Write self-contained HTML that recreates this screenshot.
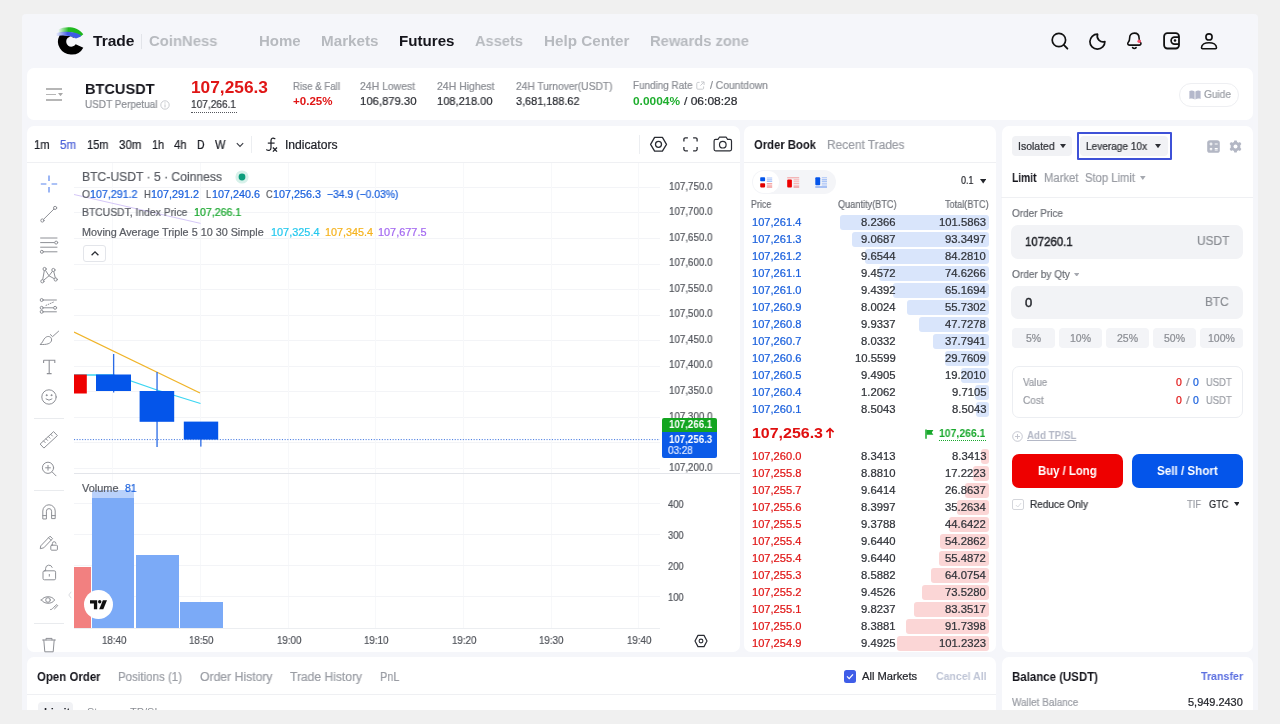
<!DOCTYPE html>
<html><head><meta charset="utf-8"><title>Futures</title>
<style>
html,body{margin:0;padding:0;}
body{width:1280px;height:724px;overflow:hidden;background:#f0f0f0;font-family:"Liberation Sans",sans-serif;position:relative;}
.b{position:absolute;display:block;}
.t{position:absolute;line-height:1;white-space:pre;transform-origin:0 0;display:block;will-change:transform;}
</style></head><body>
<div class="b" style="left:21.7px;top:13.6px;width:1236.4px;height:696.4px;background:#f5f6fa;border-radius:4px 4px 0 0;"></div>
<svg class="b" style="left:55px;top:25px;" width="32" height="32" viewBox="0 0 32 32">
<defs><linearGradient id="lg1" x1="0" x2="1" y1="0" y2="0"><stop offset="0" stop-color="#2fc62f" stop-opacity="0.05"/><stop offset="0.4" stop-color="#22bb22"/><stop offset="1" stop-color="#1cb51c"/></linearGradient>
<linearGradient id="lg2" x1="0" x2="1" y1="0" y2="0"><stop offset="0" stop-color="#5a72ee" stop-opacity="0.1"/><stop offset="0.45" stop-color="#3f5ce6"/><stop offset="1" stop-color="#3c5ae6"/></linearGradient></defs>
<path d="M28.3 22.7 A12.9 12.9 0 0 1 16.3 29.5 A12.9 12.9 0 0 1 4.6 10.4 Q12.5 9.4 20.2 13.3 A5.1 5.1 0 1 0 20.7 19.15 Z" fill="#000"/>
<path d="M3.5 4.4 C10 1.2 22 0.8 28.3 9.2 L25.6 11.6 C20 6.4 10 6.4 3.5 7.8 Z" fill="url(#lg1)"/>
<path d="M1.5 8 C8 6.4 18 5.6 25.8 10.2 L25.5 11.7 L21 13.6 C16 9.8 8 10.1 1.5 10.9 Z" fill="url(#lg2)"/>
</svg>
<span class="t" id="t0" style="top:33.10px;font-size:15px;color:#15151c;font-weight:bold;left:93.00px;transform:scaleX(1.0367);">Trade</span>
<div class="b" style="left:141px;top:34px;width:1px;height:15px;background:#e2e4e9;"></div>
<span class="t" id="t1" style="top:33.10px;font-size:15px;color:#b7babf;font-weight:bold;left:149.00px;transform:scaleX(0.9901);">CoinNess</span>
<span class="t" id="t2" style="top:33.10px;font-size:15px;color:#b7babf;font-weight:bold;left:258.50px;transform:scaleX(0.9955);">Home</span>
<span class="t" id="t3" style="top:33.10px;font-size:15px;color:#b7babf;font-weight:bold;left:320.50px;transform:scaleX(1.0141);">Markets</span>
<span class="t" id="t4" style="top:33.10px;font-size:15px;color:#15151c;font-weight:bold;left:398.50px;transform:scaleX(1.0088);">Futures</span>
<span class="t" id="t5" style="top:33.10px;font-size:15px;color:#b7babf;font-weight:bold;left:475.00px;transform:scaleX(0.9755);">Assets</span>
<span class="t" id="t6" style="top:33.10px;font-size:15px;color:#b7babf;font-weight:bold;left:543.50px;transform:scaleX(1.0156);">Help Center</span>
<span class="t" id="t7" style="top:33.10px;font-size:15px;color:#b7babf;font-weight:bold;left:649.50px;transform:scaleX(0.9814);">Rewards zone</span>
<svg class="b" style="left:1049px;top:31px;" width="20" height="20" viewBox="0 0 20 20"><circle cx="9.9" cy="9" r="6.7" fill="none" stroke="#111" stroke-width="1.7"/><path d="M14.8 13.9 L18.4 17.7" stroke="#111" stroke-width="1.8" stroke-linecap="round"/></svg>
<svg class="b" style="left:1087px;top:31px;" width="20" height="20" viewBox="0 0 20 20"><path d="M10.6 3.2 A7.5 7.5 0 1 0 17.9 10.6 A5.8 5.8 0 0 1 10.6 3.2 Z" fill="none" stroke="#111" stroke-width="1.7" stroke-linejoin="round"/></svg>
<svg class="b" style="left:1124px;top:30px;" width="20" height="22" viewBox="0 0 20 22"><path d="M10.35 3.1 C7.2 3.1 5.6 5.4 5.6 8.2 C5.6 10.4 5.2 11.4 4.3 12.3 C3.3 13.3 3.6 15.1 5.4 15.1 H15.3 C17.1 15.1 17.4 13.3 16.4 12.3 C15.5 11.4 15.1 10.4 15.1 8.2 C15.1 5.4 13.5 3.1 10.35 3.1 Z" fill="none" stroke="#111" stroke-width="1.6" stroke-linejoin="round"/><path d="M8.6 17.6 Q10.35 19.4 12.1 17.6" fill="none" stroke="#111" stroke-width="1.6" stroke-linecap="round"/><circle cx="15.2" cy="11.3" r="1.8" fill="#f4516a"/></svg>
<svg class="b" style="left:1162px;top:32px;" width="20" height="18" viewBox="0 0 20 18"><rect x="2.1" y="1.2" width="14.9" height="15.3" rx="3.3" fill="none" stroke="#111" stroke-width="1.8"/><path d="M17 5.1 H12.6 A3.5 3.5 0 0 0 12.6 12.1 H17" fill="none" stroke="#111" stroke-width="1.7"/><circle cx="13" cy="8.6" r="1.25" fill="#111"/></svg>
<svg class="b" style="left:1199px;top:31px;" width="20" height="20" viewBox="0 0 20 20"><circle cx="10" cy="5.95" r="3.1" fill="none" stroke="#111" stroke-width="1.6"/><path d="M2.5 16.8 C2.5 13.4 6 11.7 10 11.7 C14 11.7 17.5 13.4 17.5 16.8 C17.5 17.5 17.1 17.8 16.5 17.8 H3.5 C2.9 17.8 2.5 17.5 2.5 16.8 Z" fill="none" stroke="#111" stroke-width="1.6" stroke-linejoin="round"/></svg>
<div class="b" style="left:27px;top:68px;width:1226px;height:52.3px;background:#ffffff;border-radius:7px;"></div>
<div class="b" style="left:45.5px;top:88.3px;width:16.5px;height:1.6px;background:#b6b6b6;"></div>
<div class="b" style="left:45.5px;top:93.8px;width:10.5px;height:1.6px;background:#b6b6b6;"></div>
<div class="b" style="left:45.5px;top:99.3px;width:16.5px;height:1.6px;background:#b6b6b6;"></div>
<svg class="b" style="left:57.5px;top:93.3px;" width="5" height="3.2" viewBox="0 0 5 3.2"><path d="M0 0 H5 L2.5 3.2 Z" fill="#a8a8a8"/></svg>
<span class="t" id="t8" style="top:80.80px;font-size:15px;color:#15151c;font-weight:bold;left:84.50px;transform:scaleX(0.9697);">BTCUSDT</span>
<span class="t" id="t9" style="top:99.11px;font-size:10.5px;color:#8b8e94;-webkit-text-stroke:0.22px;left:84.50px;transform:scaleX(0.9506);">USDT Perpetual</span>
<svg class="b" style="left:159.5px;top:100px;" width="10" height="10" viewBox="0 0 10 10"><circle cx="5" cy="5" r="4.2" fill="none" stroke="#c4c6cb" stroke-width="0.9"/><path d="M5 4.4 V7.4" stroke="#c4c6cb" stroke-width="1"/><circle cx="5" cy="2.9" r="0.6" fill="#c4c6cb"/></svg>
<span class="t" id="t10" style="top:79.21px;font-size:17px;color:#e01616;font-weight:bold;left:191.00px;transform:scaleX(1.0180);">107,256.3</span>
<span class="t" id="t11" style="top:99.27px;font-size:11.5px;color:#33353b;-webkit-text-stroke:0.22px;left:191.00px;transform:scaleX(0.8794);">107,266.1</span>
<div class="b" style="left:191px;top:111.5px;width:45.5px;height:1px;border-top:1px dotted #55575d;"></div>
<span class="t" id="t12" style="top:80.91px;font-size:10.5px;color:#8b8e94;-webkit-text-stroke:0.22px;left:292.50px;transform:scaleX(0.9258);">Rise &amp; Fall</span>
<span class="t" id="t13" style="top:96.27px;font-size:11.5px;color:#e01616;font-weight:bold;left:292.50px;transform:scaleX(1.0044);">+0.25%</span>
<span class="t" id="t14" style="top:80.91px;font-size:10.5px;color:#8b8e94;-webkit-text-stroke:0.22px;left:360.00px;transform:scaleX(0.9918);">24H Lowest</span>
<span class="t" id="t15" style="top:96.27px;font-size:11.5px;color:#2a2c32;-webkit-text-stroke:0.22px;left:360.00px;transform:scaleX(0.9815);">106,879.30</span>
<span class="t" id="t16" style="top:80.91px;font-size:10.5px;color:#8b8e94;-webkit-text-stroke:0.22px;left:437.00px;transform:scaleX(0.9951);">24H Highest</span>
<span class="t" id="t17" style="top:96.27px;font-size:11.5px;color:#2a2c32;-webkit-text-stroke:0.22px;left:437.00px;transform:scaleX(0.9642);">108,218.00</span>
<span class="t" id="t18" style="top:80.91px;font-size:10.5px;color:#8b8e94;-webkit-text-stroke:0.22px;left:515.50px;transform:scaleX(0.9728);">24H Turnover(USDT)</span>
<span class="t" id="t19" style="top:96.27px;font-size:11.5px;color:#2a2c32;-webkit-text-stroke:0.22px;left:515.50px;transform:scaleX(0.9456);">3,681,188.62</span>
<span class="t" id="t20" style="top:80.11px;font-size:10.5px;color:#8b8e94;-webkit-text-stroke:0.22px;left:633.00px;transform:scaleX(0.9437);">Funding Rate</span>
<svg class="b" style="left:696px;top:80.5px;" width="9" height="9" viewBox="0 0 9 9"><path d="M3.6 1.4 H1.8 A1 1 0 0 0 0.8 2.4 V7.2 A1 1 0 0 0 1.8 8.2 H6.6 A1 1 0 0 0 7.6 7.2 V5.4" fill="none" stroke="#c4c6cb" stroke-width="0.9"/><path d="M5 0.9 H8.1 V4 M8 1 L4.4 4.6" fill="none" stroke="#c4c6cb" stroke-width="0.9"/></svg>
<span class="t" id="t21" style="top:80.11px;font-size:10.5px;color:#8b8e94;-webkit-text-stroke:0.22px;left:709.50px;transform:scaleX(0.9836);">/ Countdown</span>
<span class="t" id="t22" style="top:96.27px;font-size:11.5px;color:#1fae2e;font-weight:bold;left:633.00px;transform:scaleX(1.0351);">0.0004%</span>
<span class="t" id="t23" style="top:96.27px;font-size:11.5px;color:#2a2c32;-webkit-text-stroke:0.22px;left:684.00px;transform:scaleX(1.0458);">/ 06:08:28</span>
<div class="b" style="left:1179px;top:83px;width:60px;height:23.5px;background:#fff;border-radius:12px;border:1px solid #eeeff2;box-sizing:border-box;"></div>
<svg class="b" style="left:1188.5px;top:89.5px;" width="12" height="10" viewBox="0 0 12 10"><path d="M0.4 1 C2 0.2 4 0.3 5.6 1.4 V9.4 C4 8.4 2 8.3 0.4 9 Z M11.6 1 C10 0.2 8 0.3 6.4 1.4 V9.4 C8 8.4 10 8.3 11.6 9 Z" fill="#b4b8cb"/></svg>
<span class="t" id="t24" style="top:89.41px;font-size:10.5px;color:#9b9ea5;-webkit-text-stroke:0.22px;left:1204.00px;transform:scaleX(0.9632);">Guide</span>
<div class="b" style="left:27px;top:126.2px;width:713px;height:525.8px;background:#ffffff;border-radius:7px;"></div>
<span class="t" id="t25" style="top:138.79px;font-size:12px;color:#1d1f26;-webkit-text-stroke:0.22px;left:34.00px;transform:scaleX(0.9297);">1m</span>
<span class="t" id="t26" style="top:138.79px;font-size:12px;color:#4d62d8;-webkit-text-stroke:0.22px;left:60.00px;transform:scaleX(0.9597);">5m</span>
<span class="t" id="t27" style="top:138.79px;font-size:12px;color:#1d1f26;-webkit-text-stroke:0.22px;left:86.50px;transform:scaleX(0.9210);">15m</span>
<span class="t" id="t28" style="top:138.79px;font-size:12px;color:#1d1f26;-webkit-text-stroke:0.22px;left:118.50px;transform:scaleX(0.9639);">30m</span>
<span class="t" id="t29" style="top:138.79px;font-size:12px;color:#1d1f26;-webkit-text-stroke:0.22px;left:151.50px;transform:scaleX(0.8982);">1h</span>
<span class="t" id="t30" style="top:138.79px;font-size:12px;color:#1d1f26;-webkit-text-stroke:0.22px;left:174.00px;transform:scaleX(0.9357);">4h</span>
<span class="t" id="t31" style="top:138.79px;font-size:12px;color:#1d1f26;-webkit-text-stroke:0.22px;left:197.00px;transform:scaleX(0.8649);">D</span>
<span class="t" id="t32" style="top:138.79px;font-size:12px;color:#1d1f26;-webkit-text-stroke:0.22px;left:214.50px;transform:scaleX(0.9269);">W</span>
<svg class="b" style="left:235.5px;top:141.5px;" width="8" height="6" viewBox="0 0 8 6"><path d="M0.8 1.2 L4 4.4 L7.2 1.2" fill="none" stroke="#3a3c44" stroke-width="1.1"/></svg>
<div class="b" style="left:251px;top:136px;width:1px;height:17px;background:#eceef1;"></div>
<svg class="b" style="left:265px;top:136px;" width="14" height="17" viewBox="0 0 14 17"><path d="M9.9 2.7 C8 1.5 6 2.1 6 4.6 V11.8 C6 14.4 3.6 15 1.6 13.8" fill="none" stroke="#1d1f26" stroke-width="1.2" stroke-linecap="round"/><path d="M2.8 7.1 H9.6" stroke="#1d1f26" stroke-width="1.2"/><path d="M7.9 11.5 L12 15.6 M12 11.5 L7.9 15.6" stroke="#1d1f26" stroke-width="1.3"/></svg>
<span class="t" id="t33" style="top:138.79px;font-size:12px;color:#1d1f26;-webkit-text-stroke:0.22px;left:285.20px;transform:scaleX(1.0109);">Indicators</span>
<div class="b" style="left:639px;top:135px;width:1px;height:19px;background:#eceef1;"></div>
<svg class="b" style="left:649px;top:135px;" width="20" height="18" viewBox="0 0 20 18"><path d="M5.6 2.4 H13.4 L17.5 9.3 L13.4 16.1 H5.6 L1.6 9.3 Z" fill="none" stroke="#2a2c33" stroke-width="1.3" stroke-linejoin="round"/><circle cx="9.5" cy="9.3" r="3" fill="none" stroke="#2a2c33" stroke-width="1.3"/></svg>
<svg class="b" style="left:683.4px;top:137.1px;" width="16" height="15" viewBox="0 0 16 15"><path d="M0.9 4.6 V2.3 A1.5 1.5 0 0 1 2.4 0.8 H4.9 M10.1 0.8 H12.6 A1.5 1.5 0 0 1 14.1 2.3 V4.6 M14.1 9.9 V12.3 A1.5 1.5 0 0 1 12.6 13.8 H10.1 M4.9 13.8 H2.4 A1.5 1.5 0 0 1 0.9 12.3 V9.9" fill="none" stroke="#2a2c33" stroke-width="1.3"/></svg>
<svg class="b" style="left:713px;top:136px;" width="20" height="16" viewBox="0 0 20 16"><path d="M2.6 3.4 H5 L6.4 1.2 H13.2 L14.6 3.4 H17 A1.5 1.5 0 0 1 18.5 4.9 V13.3 A1.5 1.5 0 0 1 17 14.8 H2.6 A1.5 1.5 0 0 1 1.1 13.3 V4.9 A1.5 1.5 0 0 1 2.6 3.4 Z" fill="none" stroke="#2a2c33" stroke-width="1.2" stroke-linejoin="round"/><circle cx="9.8" cy="8.7" r="3.3" fill="none" stroke="#2a2c33" stroke-width="1.2"/></svg>
<div class="b" style="left:27px;top:162px;width:713px;height:1px;background:#eff0f3;"></div>
<div class="b" style="left:74px;top:187px;width:586px;height:1px;background:#f3f4f7;"></div>
<div class="b" style="left:74px;top:212px;width:586px;height:1px;background:#f3f4f7;"></div>
<div class="b" style="left:74px;top:238px;width:586px;height:1px;background:#f3f4f7;"></div>
<div class="b" style="left:74px;top:264px;width:586px;height:1px;background:#f3f4f7;"></div>
<div class="b" style="left:74px;top:289px;width:586px;height:1px;background:#f3f4f7;"></div>
<div class="b" style="left:74px;top:315px;width:586px;height:1px;background:#f3f4f7;"></div>
<div class="b" style="left:74px;top:340px;width:586px;height:1px;background:#f3f4f7;"></div>
<div class="b" style="left:74px;top:366px;width:586px;height:1px;background:#f3f4f7;"></div>
<div class="b" style="left:74px;top:391px;width:586px;height:1px;background:#f3f4f7;"></div>
<div class="b" style="left:74px;top:417px;width:586px;height:1px;background:#f3f4f7;"></div>
<div class="b" style="left:74px;top:442px;width:586px;height:1px;background:#f3f4f7;"></div>
<div class="b" style="left:74px;top:468px;width:586px;height:1px;background:#f3f4f7;"></div>
<div class="b" style="left:112px;top:163px;width:1px;height:465px;background:#f7f8fa;"></div>
<div class="b" style="left:200px;top:163px;width:1px;height:465px;background:#f7f8fa;"></div>
<div class="b" style="left:288px;top:163px;width:1px;height:465px;background:#f7f8fa;"></div>
<div class="b" style="left:375px;top:163px;width:1px;height:465px;background:#f7f8fa;"></div>
<div class="b" style="left:463px;top:163px;width:1px;height:465px;background:#f7f8fa;"></div>
<div class="b" style="left:551px;top:163px;width:1px;height:465px;background:#f7f8fa;"></div>
<div class="b" style="left:638px;top:163px;width:1px;height:465px;background:#f7f8fa;"></div>
<div class="b" style="left:74px;top:503px;width:586px;height:1px;background:#f3f4f7;"></div>
<div class="b" style="left:74px;top:534px;width:586px;height:1px;background:#f3f4f7;"></div>
<div class="b" style="left:74px;top:565px;width:586px;height:1px;background:#f3f4f7;"></div>
<div class="b" style="left:74px;top:596px;width:586px;height:1px;background:#f3f4f7;"></div>
<div class="b" style="left:74px;top:473px;width:666px;height:1px;background:#e3e5ea;"></div>
<div class="b" style="left:74px;top:628px;width:586px;height:1px;background:#eceef1;"></div>
<svg class="b" style="left:74px;top:163px;" width="590" height="310" viewBox="0 0 590 310">
<path d="M0 31.5 L126.6 60.4" stroke="#c9b8f5" stroke-width="0.8" fill="none"/>
<path d="M0 169 L126 230" stroke="#f0b429" stroke-width="1.3" fill="none"/>
<path d="M0 212 L39.5 212 L83 227 L126.5 240.5" stroke="#3cd6f2" stroke-width="1.3" fill="none"/>
<rect x="0" y="211.5" width="12.8" height="19" fill="#ee0000"/>
<rect x="39" y="191" width="1.3" height="38.5" fill="#2a6be6"/>
<rect x="22" y="211.5" width="35" height="16.5" fill="#0455ea"/>
<rect x="82.4" y="209" width="1.3" height="75" fill="#2a6be6"/>
<rect x="65.6" y="228" width="34.6" height="30.8" fill="#0455ea"/>
<rect x="126.2" y="276" width="1.3" height="7.6" fill="#2a6be6"/>
<rect x="109.8" y="258.6" width="34.4" height="18" fill="#0455ea"/>
<path d="M0 276.6 H586" stroke="#2a66dd" stroke-width="0.9" stroke-dasharray="1.1 1.6" fill="none"/>
</svg>
<div class="b" style="left:74px;top:567px;width:17px;height:61px;background:#f28080;"></div>
<div class="b" style="left:92px;top:497.5px;width:42px;height:130.5px;background:#7baaf7;"></div>
<div class="b" style="left:135.5px;top:555px;width:43px;height:73px;background:#7baaf7;"></div>
<div class="b" style="left:179.6px;top:602px;width:43px;height:26px;background:#7baaf7;"></div>
<div class="b" style="left:92px;top:489.5px;width:42px;height:8px;background:#b9d1fb;"></div>
<span class="t" id="t34" style="top:171.23px;font-size:12.6px;color:#5a5d64;-webkit-text-stroke:0.22px;left:81.70px;transform:scaleX(0.9633);">BTC-USDT · 5 · Coinness</span>
<svg class="b" style="left:235px;top:170px;" width="14" height="14" viewBox="0 0 14 14"><circle cx="7" cy="7" r="6.6" fill="#d7f1ea"/><circle cx="7" cy="7" r="3.4" fill="#0c9d7c"/></svg>
<span class="t" id="t35" style="top:188.96px;font-size:10.8px;color:#5a5d64;-webkit-text-stroke:0.22px;left:81.70px;transform:scaleX(0.9517);">O</span>
<span class="t" id="t36" style="top:188.96px;font-size:10.8px;color:#1a60dd;-webkit-text-stroke:0.22px;left:90.30px;transform:scaleX(0.9886);">107,291.2</span>
<span class="t" id="t37" style="top:188.96px;font-size:10.8px;color:#5a5d64;-webkit-text-stroke:0.22px;left:143.50px;transform:scaleX(0.8960);">H</span>
<span class="t" id="t38" style="top:188.96px;font-size:10.8px;color:#1a60dd;-webkit-text-stroke:0.22px;left:151.30px;">107,291.2</span>
<span class="t" id="t39" style="top:188.96px;font-size:10.8px;color:#5a5d64;-webkit-text-stroke:0.22px;left:205.50px;transform:scaleX(0.8312);">L</span>
<span class="t" id="t40" style="top:188.96px;font-size:10.8px;color:#1a60dd;-webkit-text-stroke:0.22px;left:211.50px;">107,240.6</span>
<span class="t" id="t41" style="top:188.96px;font-size:10.8px;color:#5a5d64;-webkit-text-stroke:0.22px;left:265.50px;transform:scaleX(0.8320);">C</span>
<span class="t" id="t42" style="top:188.96px;font-size:10.8px;color:#1a60dd;-webkit-text-stroke:0.22px;left:273.00px;">107,256.3</span>
<span class="t" id="t43" style="top:188.96px;font-size:10.8px;color:#1a60dd;-webkit-text-stroke:0.22px;left:326.50px;transform:scaleX(0.9605);">−34.9 (−0.03%)</span>
<span class="t" id="t44" style="top:206.86px;font-size:10.8px;color:#5a5d64;-webkit-text-stroke:0.22px;left:81.70px;transform:scaleX(0.9589);">BTCUSDT, Index Price</span>
<span class="t" id="t45" style="top:206.86px;font-size:10.8px;color:#17a62c;-webkit-text-stroke:0.22px;left:194.40px;transform:scaleX(0.9845);">107,266.1</span>
<span class="t" id="t46" style="top:226.86px;font-size:10.8px;color:#5a5d64;-webkit-text-stroke:0.22px;left:81.70px;">Moving Average Triple 5 10 30 Simple</span>
<span class="t" id="t47" style="top:226.86px;font-size:10.8px;color:#25c8ee;-webkit-text-stroke:0.22px;left:271.00px;transform:scaleX(1.0094);">107,325.4</span>
<span class="t" id="t48" style="top:226.86px;font-size:10.8px;color:#f5b31f;-webkit-text-stroke:0.22px;left:325.00px;">107,345.4</span>
<span class="t" id="t49" style="top:226.86px;font-size:10.8px;color:#a46af0;-webkit-text-stroke:0.22px;left:378.00px;transform:scaleX(1.0094);">107,677.5</span>
<div class="b" style="left:82.5px;top:244.5px;width:23.5px;height:17px;background:#fff;border-radius:3px;border:1px solid #e3e5ea;box-sizing:border-box;"></div>
<svg class="b" style="left:89.5px;top:249.5px;" width="10" height="7" viewBox="0 0 10 7"><path d="M1.6 5.2 L5 1.8 L8.4 5.2" fill="none" stroke="#2a2c33" stroke-width="1.3"/></svg>
<span class="t" id="t50" style="top:482.66px;font-size:10.8px;color:#5a5d64;-webkit-text-stroke:0.22px;left:81.70px;transform:scaleX(1.0134);">Volume</span>
<span class="t" id="t51" style="top:482.66px;font-size:10.8px;color:#1a60dd;-webkit-text-stroke:0.22px;left:124.50px;transform:scaleX(0.9571);">81</span>
<span class="t" id="t52" style="top:180.63px;font-size:10.6px;color:#50535a;-webkit-text-stroke:0.22px;left:668.90px;transform:scaleX(0.9228);">107,750.0</span>
<span class="t" id="t53" style="top:206.18px;font-size:10.6px;color:#50535a;-webkit-text-stroke:0.22px;left:668.90px;transform:scaleX(0.9228);">107,700.0</span>
<span class="t" id="t54" style="top:231.73px;font-size:10.6px;color:#50535a;-webkit-text-stroke:0.22px;left:668.90px;transform:scaleX(0.9228);">107,650.0</span>
<span class="t" id="t55" style="top:257.28px;font-size:10.6px;color:#50535a;-webkit-text-stroke:0.22px;left:668.90px;transform:scaleX(0.9228);">107,600.0</span>
<span class="t" id="t56" style="top:282.83px;font-size:10.6px;color:#50535a;-webkit-text-stroke:0.22px;left:668.90px;transform:scaleX(0.9228);">107,550.0</span>
<span class="t" id="t57" style="top:308.38px;font-size:10.6px;color:#50535a;-webkit-text-stroke:0.22px;left:668.90px;transform:scaleX(0.9228);">107,500.0</span>
<span class="t" id="t58" style="top:333.93px;font-size:10.6px;color:#50535a;-webkit-text-stroke:0.22px;left:668.90px;transform:scaleX(0.9228);">107,450.0</span>
<span class="t" id="t59" style="top:359.48px;font-size:10.6px;color:#50535a;-webkit-text-stroke:0.22px;left:668.90px;transform:scaleX(0.9228);">107,400.0</span>
<span class="t" id="t60" style="top:385.03px;font-size:10.6px;color:#50535a;-webkit-text-stroke:0.22px;left:668.90px;transform:scaleX(0.9228);">107,350.0</span>
<span class="t" id="t61" style="top:410.58px;font-size:10.6px;color:#50535a;-webkit-text-stroke:0.22px;left:668.90px;transform:scaleX(0.9228);">107,300.0</span>
<span class="t" id="t62" style="top:461.68px;font-size:10.6px;color:#50535a;-webkit-text-stroke:0.22px;left:668.90px;transform:scaleX(0.9228);">107,200.0</span>
<div class="b" style="left:662px;top:417.7px;width:54.8px;height:14.5px;background:#13a520;border-radius:2px 2px 0 0;"></div>
<div class="b" style="left:662px;top:432px;width:54.8px;height:26px;background:#0b5be8;border-radius:0 0 2px 2px;"></div>
<span class="t" id="t63" style="top:419.23px;font-size:10.6px;color:#fff;font-weight:bold;left:669.00px;transform:scaleX(0.9164);">107,266.1</span>
<span class="t" id="t64" style="top:433.73px;font-size:10.6px;color:#fff;font-weight:bold;left:669.00px;transform:scaleX(0.9164);">107,256.3</span>
<span class="t" id="t65" style="top:445.23px;font-size:10.6px;color:#dfe8ff;-webkit-text-stroke:0.22px;left:668.30px;transform:scaleX(0.9353);">03:28</span>
<span class="t" id="t66" style="top:498.53px;font-size:10.6px;color:#50535a;-webkit-text-stroke:0.22px;left:668.30px;transform:scaleX(0.8876);">400</span>
<span class="t" id="t67" style="top:529.63px;font-size:10.6px;color:#50535a;-webkit-text-stroke:0.22px;left:668.30px;transform:scaleX(0.8876);">300</span>
<span class="t" id="t68" style="top:560.73px;font-size:10.6px;color:#50535a;-webkit-text-stroke:0.22px;left:668.30px;transform:scaleX(0.8876);">200</span>
<span class="t" id="t69" style="top:591.83px;font-size:10.6px;color:#50535a;-webkit-text-stroke:0.22px;left:668.30px;transform:scaleX(0.8876);">100</span>
<span class="t" id="t70" style="top:635.19px;font-size:11px;color:#50535a;-webkit-text-stroke:0.22px;left:101.50px;transform:scaleX(0.8863);">18:40</span>
<span class="t" id="t71" style="top:635.19px;font-size:11px;color:#50535a;-webkit-text-stroke:0.22px;left:189.00px;transform:scaleX(0.8863);">18:50</span>
<span class="t" id="t72" style="top:635.19px;font-size:11px;color:#50535a;-webkit-text-stroke:0.22px;left:276.50px;transform:scaleX(0.8863);">19:00</span>
<span class="t" id="t73" style="top:635.19px;font-size:11px;color:#50535a;-webkit-text-stroke:0.22px;left:364.00px;transform:scaleX(0.8863);">19:10</span>
<span class="t" id="t74" style="top:635.19px;font-size:11px;color:#50535a;-webkit-text-stroke:0.22px;left:451.50px;transform:scaleX(0.8863);">19:20</span>
<span class="t" id="t75" style="top:635.19px;font-size:11px;color:#50535a;-webkit-text-stroke:0.22px;left:539.00px;transform:scaleX(0.8863);">19:30</span>
<span class="t" id="t76" style="top:635.19px;font-size:11px;color:#50535a;-webkit-text-stroke:0.22px;left:627.00px;transform:scaleX(0.8863);">19:40</span>
<svg class="b" style="left:693.7px;top:633.8px;" width="14" height="14" viewBox="0 0 14 14"><path d="M4 1.4 H10 L13 7 L10 12.6 H4 L1 7 Z" fill="none" stroke="#2a2c33" stroke-width="1.2" stroke-linejoin="round"/><circle cx="7" cy="7" r="1.9" fill="none" stroke="#2a2c33" stroke-width="1.1"/></svg>
<svg class="b" style="left:83.5px;top:589.5px;" width="29" height="29" viewBox="0 0 29 29"><circle cx="14.5" cy="14.5" r="14.5" fill="#fff"/><path d="M6 10.2 H13.2 V19.2 H9.9 V13.4 H6 Z" fill="#111"/><circle cx="15.7" cy="11.8" r="1.7" fill="#111"/><path d="M18.9 10.2 H23 L19.3 19.2 H15.2 Z" fill="#111"/></svg>
<svg class="b" style="left:67.5px;top:590.5px;" width="4" height="8" viewBox="0 0 4 8"><path d="M3.2 0.8 L0.8 4 L3.2 7.2" fill="none" stroke="#d5d7dc" stroke-width="0.9"/></svg>
<svg class="b" style="left:37px;top:172px;" width="24" height="24" viewBox="0 0 24 24"><g stroke="#5a86ee" stroke-width="1.2" fill="none"><path d="M12 3.6 V9 M12 15 V20.4 M3.8 12 H9.4 M14.6 12 H20.2"/></g></svg>
<svg class="b" style="left:37.0px;top:202.0px;" width="24" height="24" viewBox="0 0 24 24"><g fill="none" stroke="#8e9096" stroke-width="1" stroke-linecap="round" stroke-linejoin="round"><path d="M6.6 17.3 L16.9 7.1"/><circle cx="5.4" cy="18.5" r="1.6"/><circle cx="18.1" cy="5.9" r="1.6"/></g></svg>
<svg class="b" style="left:37.0px;top:232.5px;" width="24" height="24" viewBox="0 0 24 24"><g fill="none" stroke="#8e9096" stroke-width="1" stroke-linecap="round" stroke-linejoin="round"><path d="M3.6 5 H20 M3.6 9.6 H17.6 M3.6 14.2 H20 M6.6 18.8 H20"/><circle cx="19.2" cy="9.6" r="1.5" fill="#fff"/><circle cx="4.9" cy="18.8" r="1.5" fill="#fff"/></g></svg>
<svg class="b" style="left:37.0px;top:263.0px;" width="24" height="24" viewBox="0 0 24 24"><g fill="none" stroke="#8e9096" stroke-width="1" stroke-linecap="round" stroke-linejoin="round"><path d="M5.4 18.3 L7.6 6 L12 12.8 L16.4 7 L18.7 16.5 L12 12.8 L5.4 18.3"/><circle cx="7.6" cy="6" r="1.6" fill="#fff"/><circle cx="16.4" cy="7" r="1.6" fill="#fff"/><circle cx="5.4" cy="18.3" r="1.6" fill="#fff"/><circle cx="18.7" cy="16.5" r="1.6" fill="#fff"/></g></svg>
<svg class="b" style="left:37.0px;top:294.0px;" width="24" height="24" viewBox="0 0 24 24"><g fill="none" stroke="#8e9096" stroke-width="1" stroke-linecap="round" stroke-linejoin="round"><path d="M6.2 6 H19.4 M6.2 13.8 H16.6 M6.2 17.8 H19.4"/><path d="M9 11.4 L17.6 7.6" stroke-dasharray="0.8 1.6"/><circle cx="4.7" cy="6" r="1.5" fill="#fff"/><circle cx="4.7" cy="13.8" r="1.5" fill="#fff"/><circle cx="18.1" cy="13.8" r="1.5" fill="#fff"/><circle cx="4.7" cy="17.8" r="1.5" fill="#fff"/></g></svg>
<svg class="b" style="left:37.0px;top:326.0px;" width="24" height="24" viewBox="0 0 24 24"><g fill="none" stroke="#8e9096" stroke-width="1" stroke-linecap="round" stroke-linejoin="round"><path d="M3.4 18.4 C5.8 17 6 13.4 8.6 11.4 C11.4 9.4 14.8 10.8 14.6 14 C14.4 17.6 9.4 19 3.4 18.4 Z"/><path d="M13.4 8.6 L15.6 10.6 L21.6 5.2"/></g></svg>
<svg class="b" style="left:37px;top:355px;" width="24" height="24" viewBox="0 0 24 24"><path d="M6.6 5.2 H17.8 V8 M6.6 5.2 V8 M12.2 5.2 V18.6 M9.8 18.6 H14.6" fill="none" stroke="#8e9096" stroke-width="1.1"/></svg>
<svg class="b" style="left:36.8px;top:385.4px;" width="24" height="24" viewBox="0 0 24 24"><g fill="none" stroke="#8e9096" stroke-width="1" stroke-linecap="round" stroke-linejoin="round"><circle cx="12" cy="12" r="7.2"/><path d="M9 14 Q12 16.6 15 14"/><circle cx="9.6" cy="10.2" r="0.5" fill="#8e9096"/><circle cx="14.4" cy="10.2" r="0.5" fill="#8e9096"/></g></svg>
<div class="b" style="left:33.5px;top:417.5px;width:30px;height:1px;background:#e9ebee;"></div>
<svg class="b" style="left:37.0px;top:427.0px;" width="24" height="24" viewBox="0 0 24 24"><g fill="none" stroke="#8e9096" stroke-width="1" stroke-linecap="round" stroke-linejoin="round"><path d="M3.4 16.8 L16.6 4.6 L20.4 8.6 L7.2 20.8 Z"/><path d="M6.6 14 L8.2 15.6 M9 11.8 L10.6 13.4 M11.4 9.6 L13 11.2 M13.8 7.4 L15.4 9"/></g></svg>
<svg class="b" style="left:36.5px;top:457.0px;" width="24" height="24" viewBox="0 0 24 24"><g fill="none" stroke="#8e9096" stroke-width="1" stroke-linecap="round" stroke-linejoin="round"><circle cx="11" cy="10.8" r="5.6"/><path d="M15.2 15 L19 18.8 M8.6 10.8 H13.4 M11 8.4 V13.2"/></g></svg>
<div class="b" style="left:33.5px;top:490px;width:30px;height:1px;background:#e9ebee;"></div>
<svg class="b" style="left:37.0px;top:499.5px;" width="24" height="24" viewBox="0 0 24 24"><g fill="none" stroke="#8e9096" stroke-width="1" stroke-linecap="round" stroke-linejoin="round"><path d="M5.8 18.6 V11 A6.2 6.2 0 0 1 18.2 11 V18.6 H14.6 V11.2 A2.6 2.6 0 0 0 9.4 11.2 V18.6 Z"/><path d="M5.8 15.6 H9.4 M14.6 15.6 H18.2"/></g></svg>
<svg class="b" style="left:37.0px;top:530.0px;" width="24" height="24" viewBox="0 0 24 24"><g fill="none" stroke="#8e9096" stroke-width="1" stroke-linecap="round" stroke-linejoin="round"><path d="M4 15.6 L13 6.2 L15.6 8.6 L6.8 17.8 L3.6 18.6 Z M11.6 7.8 L14 10.2"/><rect x="13.8" y="15.2" width="6.6" height="5" rx="0.8"/><path d="M15.4 15.2 V13.6 A1.8 1.8 0 0 1 19 13.4"/></g></svg>
<svg class="b" style="left:37.0px;top:560.5px;" width="24" height="24" viewBox="0 0 24 24"><g fill="none" stroke="#8e9096" stroke-width="1" stroke-linecap="round" stroke-linejoin="round"><rect x="6" y="9.8" width="12.6" height="9" rx="1.4"/><path d="M8.6 9.8 V7.4 A3.4 3.4 0 0 1 15.2 6.4"/><path d="M12.3 13.4 V15.2"/></g></svg>
<svg class="b" style="left:36.5px;top:589.5px;" width="24" height="24" viewBox="0 0 24 24"><g fill="none" stroke="#8e9096" stroke-width="1" stroke-linecap="round" stroke-linejoin="round"><path d="M4.4 10 C7 5.6 15 5.6 17.6 10 C15 14.4 7 14.4 4.4 10 Z"/><circle cx="11" cy="10" r="2.3"/><path d="M13.6 19.6 C15 19.6 15.6 18.6 16.4 17.6 L19.8 14.6 L20.8 15.6 L17.6 18.8"/></g></svg>
<div class="b" style="left:33.5px;top:623px;width:30px;height:1px;background:#e9ebee;"></div>
<svg class="b" style="left:37.0px;top:632.5px;" width="24" height="24" viewBox="0 0 24 24"><g fill="none" stroke="#8e9096" stroke-width="1" stroke-linecap="round" stroke-linejoin="round"><path d="M5.6 7 H18.4 M9 7 V5.4 H15 V7 M6.8 7 L7.8 18.8 H16.2 L17.2 7"/></g></svg>
<div class="b" style="left:744px;top:126.2px;width:251.9px;height:525.8px;background:#ffffff;border-radius:7px;"></div>
<span class="t" id="t77" style="top:139.02px;font-size:12.5px;color:#15151c;font-weight:bold;left:754.40px;transform:scaleX(0.9016);">Order Book</span>
<span class="t" id="t78" style="top:139.02px;font-size:12.5px;color:#9a9da4;-webkit-text-stroke:0.22px;left:827.00px;transform:scaleX(0.9533);">Recent Trades</span>
<div class="b" style="left:744px;top:162px;width:252px;height:1px;background:#eff0f3;"></div>
<div class="b" style="left:751.5px;top:170px;width:84px;height:24px;background:#f4f5f8;border-radius:12px;"></div>
<div class="b" style="left:752.5px;top:171.2px;width:26.8px;height:21.6px;background:#fff;border-radius:10.8px;"></div>
<svg class="b" style="left:760px;top:176.5px;" width="13" height="11" viewBox="0 0 13 11"><rect x="0.2" y="0.3" width="4.9" height="4" rx="0.8" fill="#0455ea"/><rect x="0.2" y="6.2" width="4.9" height="4.2" rx="0.8" fill="#e00000"/><path d="M6.8 1 H12.2 M6.8 2.7 H12.2 M6.8 4.4 H12.2" stroke="#a9c4f7" stroke-width="1.1"/><path d="M6.8 6.6 H12.2 M6.8 8.3 H12.2" stroke="#f5aaaa" stroke-width="1.1"/><path d="M6.8 10 H12.2" stroke="#ea6a6a" stroke-width="1"/></svg>
<svg class="b" style="left:787.4px;top:176.5px;" width="13" height="11" viewBox="0 0 13 11"><path d="M0.2 0.8 H12.2" stroke="#f29b9b" stroke-width="1"/><rect x="0.2" y="2.5" width="4.7" height="7.9" rx="0.9" fill="#ee0000"/><path d="M6.6 2.9 H12.2 M6.6 4.7 H12.2 M6.6 6.5 H12.2 M6.6 8.3 H12.2" stroke="#f7b5b5" stroke-width="1.1"/><path d="M6.6 10 H12.2" stroke="#ea6a6a" stroke-width="1"/></svg>
<svg class="b" style="left:814.6px;top:176.5px;" width="13" height="11" viewBox="0 0 13 11"><rect x="0.3" y="0.3" width="4.9" height="7.9" rx="0.9" fill="#0455ea"/><path d="M6.8 0.8 H12 M6.8 2.6 H12 M6.8 4.4 H12 M6.8 6.2 H12 M6.8 8 H12" stroke="#a9c4f7" stroke-width="1.1"/><path d="M0.3 10 H12" stroke="#5a8cf0" stroke-width="1"/></svg>
<span class="t" id="t79" style="top:175.47px;font-size:11.5px;color:#24262c;-webkit-text-stroke:0.22px;left:961.00px;transform:scaleX(0.7812);">0.1</span>
<svg class="b" style="left:979.6px;top:179.4px;" width="6.4" height="4.4" viewBox="0 0 6.4 4.4"><path d="M0 0 H6.4 L3.2 4.4 Z" fill="#24262c"/></svg>
<span class="t" id="t80" style="top:199.53px;font-size:10px;color:#6c6f76;-webkit-text-stroke:0.22px;left:751.40px;transform:scaleX(0.8861);">Price</span>
<span class="t" id="t81" style="top:199.53px;font-size:10px;color:#6c6f76;-webkit-text-stroke:0.22px;left:838.40px;transform:scaleX(0.9170);">Quantity(BTC)</span>
<span class="t" id="t82" style="top:199.53px;font-size:10px;color:#6c6f76;-webkit-text-stroke:0.22px;left:945.40px;transform:scaleX(0.9122);">Total(BTC)</span>
<div class="b" style="left:839.59702859px;top:215.2px;width:149.40297141px;height:14.6px;background:#d9e5fb;border-radius:3px;"></div>
<span class="t" id="t83" style="top:217.31px;font-size:10.5px;color:#1a60dd;-webkit-text-stroke:0.22px;left:751.60px;transform:scaleX(1.0574);">107,261.4</span>
<span class="t" id="t84" style="top:217.31px;font-size:10.5px;color:#303339;-webkit-text-stroke:0.22px;left:860.90px;transform:scaleX(1.0739);">8.2366</span>
<span class="t" id="t85" style="top:217.31px;font-size:10.5px;color:#303339;-webkit-text-stroke:0.22px;left:938.90px;transform:scaleX(1.0754);">101.5863</span>
<div class="b" style="left:851.71059621px;top:232.2px;width:137.28940379px;height:14.6px;background:#d9e5fb;border-radius:3px;"></div>
<span class="t" id="t86" style="top:234.31px;font-size:10.5px;color:#1a60dd;-webkit-text-stroke:0.22px;left:751.60px;transform:scaleX(1.0574);">107,261.3</span>
<span class="t" id="t87" style="top:234.31px;font-size:10.5px;color:#303339;-webkit-text-stroke:0.22px;left:860.90px;transform:scaleX(1.0739);">9.0687</span>
<span class="t" id="t88" style="top:234.31px;font-size:10.5px;color:#303339;-webkit-text-stroke:0.22px;left:945.20px;transform:scaleX(1.0746);">93.3497</span>
<div class="b" style="left:865.0479333px;top:249.2px;width:123.9520667px;height:14.6px;background:#d9e5fb;border-radius:3px;"></div>
<span class="t" id="t89" style="top:251.31px;font-size:10.5px;color:#1a60dd;-webkit-text-stroke:0.22px;left:751.60px;transform:scaleX(1.0574);">107,261.2</span>
<span class="t" id="t90" style="top:251.31px;font-size:10.5px;color:#303339;-webkit-text-stroke:0.22px;left:860.90px;transform:scaleX(1.0739);">9.6544</span>
<span class="t" id="t91" style="top:251.31px;font-size:10.5px;color:#303339;-webkit-text-stroke:0.22px;left:945.20px;transform:scaleX(1.0746);">84.2810</span>
<div class="b" style="left:879.24665938px;top:266.2px;width:109.75334061999999px;height:14.6px;background:#d9e5fb;border-radius:3px;"></div>
<span class="t" id="t92" style="top:268.31px;font-size:10.5px;color:#1a60dd;-webkit-text-stroke:0.22px;left:751.60px;transform:scaleX(1.0574);">107,261.1</span>
<span class="t" id="t93" style="top:268.31px;font-size:10.5px;color:#303339;-webkit-text-stroke:0.22px;left:860.90px;transform:scaleX(1.0739);">9.4572</span>
<span class="t" id="t94" style="top:268.31px;font-size:10.5px;color:#303339;-webkit-text-stroke:0.22px;left:945.20px;transform:scaleX(1.0746);">74.6266</span>
<div class="b" style="left:893.15536342px;top:283.2px;width:95.84463657999999px;height:14.6px;background:#d9e5fb;border-radius:3px;"></div>
<span class="t" id="t95" style="top:285.31px;font-size:10.5px;color:#1a60dd;-webkit-text-stroke:0.22px;left:751.60px;transform:scaleX(1.0574);">107,261.0</span>
<span class="t" id="t96" style="top:285.31px;font-size:10.5px;color:#303339;-webkit-text-stroke:0.22px;left:860.90px;transform:scaleX(1.0739);">9.4392</span>
<span class="t" id="t97" style="top:285.31px;font-size:10.5px;color:#303339;-webkit-text-stroke:0.22px;left:945.20px;transform:scaleX(1.0746);">65.1694</span>
<div class="b" style="left:907.03759486px;top:300.2px;width:81.96240514px;height:14.6px;background:#d9e5fb;border-radius:3px;"></div>
<span class="t" id="t98" style="top:302.31px;font-size:10.5px;color:#1a60dd;-webkit-text-stroke:0.22px;left:751.60px;transform:scaleX(1.0574);">107,260.9</span>
<span class="t" id="t99" style="top:302.31px;font-size:10.5px;color:#303339;-webkit-text-stroke:0.22px;left:860.90px;transform:scaleX(1.0739);">8.0024</span>
<span class="t" id="t100" style="top:302.31px;font-size:10.5px;color:#303339;-webkit-text-stroke:0.22px;left:945.20px;transform:scaleX(1.0746);">55.7302</span>
<div class="b" style="left:918.80672454px;top:317.2px;width:70.19327546px;height:14.6px;background:#d9e5fb;border-radius:3px;"></div>
<span class="t" id="t101" style="top:319.31px;font-size:10.5px;color:#1a60dd;-webkit-text-stroke:0.22px;left:751.60px;transform:scaleX(1.0574);">107,260.8</span>
<span class="t" id="t102" style="top:319.31px;font-size:10.5px;color:#303339;-webkit-text-stroke:0.22px;left:860.90px;transform:scaleX(1.0739);">9.9337</span>
<span class="t" id="t103" style="top:319.31px;font-size:10.5px;color:#303339;-webkit-text-stroke:0.22px;left:945.20px;transform:scaleX(1.0746);">47.7278</span>
<div class="b" style="left:933.41621713px;top:334.2px;width:55.58378286999999px;height:14.6px;background:#d9e5fb;border-radius:3px;"></div>
<span class="t" id="t104" style="top:336.31px;font-size:10.5px;color:#1a60dd;-webkit-text-stroke:0.22px;left:751.60px;transform:scaleX(1.0574);">107,260.7</span>
<span class="t" id="t105" style="top:336.31px;font-size:10.5px;color:#303339;-webkit-text-stroke:0.22px;left:860.90px;transform:scaleX(1.0739);">8.0332</span>
<span class="t" id="t106" style="top:336.31px;font-size:10.5px;color:#303339;-webkit-text-stroke:0.22px;left:945.20px;transform:scaleX(1.0746);">37.7941</span>
<div class="b" style="left:945.23064437px;top:351.2px;width:43.76935562999999px;height:14.6px;background:#d9e5fb;border-radius:3px;"></div>
<span class="t" id="t107" style="top:353.31px;font-size:10.5px;color:#1a60dd;-webkit-text-stroke:0.22px;left:751.60px;transform:scaleX(1.0574);">107,260.6</span>
<span class="t" id="t108" style="top:353.31px;font-size:10.5px;color:#303339;-webkit-text-stroke:0.22px;left:854.60px;transform:scaleX(1.0746);">10.5599</span>
<span class="t" id="t109" style="top:353.31px;font-size:10.5px;color:#303339;-webkit-text-stroke:0.22px;left:945.20px;transform:scaleX(1.0746);">29.7609</span>
<div class="b" style="left:960.7610893px;top:368.2px;width:28.238910699999998px;height:14.6px;background:#d9e5fb;border-radius:3px;"></div>
<span class="t" id="t110" style="top:370.31px;font-size:10.5px;color:#1a60dd;-webkit-text-stroke:0.22px;left:751.60px;transform:scaleX(1.0574);">107,260.5</span>
<span class="t" id="t111" style="top:370.31px;font-size:10.5px;color:#303339;-webkit-text-stroke:0.22px;left:860.90px;transform:scaleX(1.0739);">9.4905</span>
<span class="t" id="t112" style="top:370.31px;font-size:10.5px;color:#303339;-webkit-text-stroke:0.22px;left:945.20px;transform:scaleX(1.0746);">19.2010</span>
<div class="b" style="left:974.71876765px;top:385.2px;width:14.281232349999998px;height:14.6px;background:#d9e5fb;border-radius:3px;"></div>
<span class="t" id="t113" style="top:387.31px;font-size:10.5px;color:#1a60dd;-webkit-text-stroke:0.22px;left:751.60px;transform:scaleX(1.0574);">107,260.4</span>
<span class="t" id="t114" style="top:387.31px;font-size:10.5px;color:#303339;-webkit-text-stroke:0.22px;left:860.90px;transform:scaleX(1.0739);">1.2062</span>
<span class="t" id="t115" style="top:387.31px;font-size:10.5px;color:#303339;-webkit-text-stroke:0.22px;left:951.50px;transform:scaleX(1.0739);">9.7105</span>
<div class="b" style="left:976.49272599px;top:402.2px;width:12.50727401px;height:14.6px;background:#d9e5fb;border-radius:3px;"></div>
<span class="t" id="t116" style="top:404.31px;font-size:10.5px;color:#1a60dd;-webkit-text-stroke:0.22px;left:751.60px;transform:scaleX(1.0574);">107,260.1</span>
<span class="t" id="t117" style="top:404.31px;font-size:10.5px;color:#303339;-webkit-text-stroke:0.22px;left:860.90px;transform:scaleX(1.0739);">8.5043</span>
<span class="t" id="t118" style="top:404.31px;font-size:10.5px;color:#303339;-webkit-text-stroke:0.22px;left:951.50px;transform:scaleX(1.0739);">8.5043</span>
<div class="b" style="left:981.4511235px;top:449.2px;width:7.5488765px;height:14.6px;background:#fbd6d6;border-radius:3px;"></div>
<span class="t" id="t119" style="top:451.31px;font-size:10.5px;color:#e01616;-webkit-text-stroke:0.22px;left:751.60px;transform:scaleX(1.0574);">107,260.0</span>
<span class="t" id="t120" style="top:451.31px;font-size:10.5px;color:#303339;-webkit-text-stroke:0.22px;left:860.90px;transform:scaleX(1.0739);">8.3413</span>
<span class="t" id="t121" style="top:451.31px;font-size:10.5px;color:#303339;-webkit-text-stroke:0.22px;left:951.50px;transform:scaleX(1.0739);">8.3413</span>
<div class="b" style="left:973.4138185px;top:466.2px;width:15.5861815px;height:14.6px;background:#fbd6d6;border-radius:3px;"></div>
<span class="t" id="t122" style="top:468.31px;font-size:10.5px;color:#e01616;-webkit-text-stroke:0.22px;left:751.60px;transform:scaleX(1.0574);">107,255.8</span>
<span class="t" id="t123" style="top:468.31px;font-size:10.5px;color:#303339;-webkit-text-stroke:0.22px;left:860.90px;transform:scaleX(1.0739);">8.8810</span>
<span class="t" id="t124" style="top:468.31px;font-size:10.5px;color:#303339;-webkit-text-stroke:0.22px;left:945.20px;transform:scaleX(1.0746);">17.2223</span>
<div class="b" style="left:964.6883515px;top:483.2px;width:24.3116485px;height:14.6px;background:#fbd6d6;border-radius:3px;"></div>
<span class="t" id="t125" style="top:485.31px;font-size:10.5px;color:#e01616;-webkit-text-stroke:0.22px;left:751.60px;transform:scaleX(1.0574);">107,255.7</span>
<span class="t" id="t126" style="top:485.31px;font-size:10.5px;color:#303339;-webkit-text-stroke:0.22px;left:860.90px;transform:scaleX(1.0739);">9.6414</span>
<span class="t" id="t127" style="top:485.31px;font-size:10.5px;color:#303339;-webkit-text-stroke:0.22px;left:945.20px;transform:scaleX(1.0746);">26.8637</span>
<div class="b" style="left:957.086623px;top:500.2px;width:31.913376999999997px;height:14.6px;background:#fbd6d6;border-radius:3px;"></div>
<span class="t" id="t128" style="top:502.31px;font-size:10.5px;color:#e01616;-webkit-text-stroke:0.22px;left:751.60px;transform:scaleX(1.0574);">107,255.6</span>
<span class="t" id="t129" style="top:502.31px;font-size:10.5px;color:#303339;-webkit-text-stroke:0.22px;left:860.90px;transform:scaleX(1.0739);">8.3997</span>
<span class="t" id="t130" style="top:502.31px;font-size:10.5px;color:#303339;-webkit-text-stroke:0.22px;left:945.20px;transform:scaleX(1.0746);">35.2634</span>
<div class="b" style="left:948.598809px;top:517.2px;width:40.401191000000004px;height:14.6px;background:#fbd6d6;border-radius:3px;"></div>
<span class="t" id="t131" style="top:519.31px;font-size:10.5px;color:#e01616;-webkit-text-stroke:0.22px;left:751.60px;transform:scaleX(1.0574);">107,255.5</span>
<span class="t" id="t132" style="top:519.31px;font-size:10.5px;color:#303339;-webkit-text-stroke:0.22px;left:860.90px;transform:scaleX(1.0739);">9.3788</span>
<span class="t" id="t133" style="top:519.31px;font-size:10.5px;color:#303339;-webkit-text-stroke:0.22px;left:945.20px;transform:scaleX(1.0746);">44.6422</span>
<div class="b" style="left:939.870989px;top:534.2px;width:49.129011000000006px;height:14.6px;background:#fbd6d6;border-radius:3px;"></div>
<span class="t" id="t134" style="top:536.31px;font-size:10.5px;color:#e01616;-webkit-text-stroke:0.22px;left:751.60px;transform:scaleX(1.0574);">107,255.4</span>
<span class="t" id="t135" style="top:536.31px;font-size:10.5px;color:#303339;-webkit-text-stroke:0.22px;left:860.90px;transform:scaleX(1.0739);">9.6440</span>
<span class="t" id="t136" style="top:536.31px;font-size:10.5px;color:#303339;-webkit-text-stroke:0.22px;left:945.20px;transform:scaleX(1.0746);">54.2862</span>
<div class="b" style="left:938.784084px;top:551.2px;width:50.215916px;height:14.6px;background:#fbd6d6;border-radius:3px;"></div>
<span class="t" id="t137" style="top:553.31px;font-size:10.5px;color:#e01616;-webkit-text-stroke:0.22px;left:751.60px;transform:scaleX(1.0574);">107,255.4</span>
<span class="t" id="t138" style="top:553.31px;font-size:10.5px;color:#303339;-webkit-text-stroke:0.22px;left:860.90px;transform:scaleX(1.0739);">9.6440</span>
<span class="t" id="t139" style="top:553.31px;font-size:10.5px;color:#303339;-webkit-text-stroke:0.22px;left:945.20px;transform:scaleX(1.0746);">55.4872</span>
<div class="b" style="left:931.011763px;top:568.2px;width:57.988237000000005px;height:14.6px;background:#fbd6d6;border-radius:3px;"></div>
<span class="t" id="t140" style="top:570.31px;font-size:10.5px;color:#e01616;-webkit-text-stroke:0.22px;left:751.60px;transform:scaleX(1.0574);">107,255.3</span>
<span class="t" id="t141" style="top:570.31px;font-size:10.5px;color:#303339;-webkit-text-stroke:0.22px;left:860.90px;transform:scaleX(1.0739);">8.5882</span>
<span class="t" id="t142" style="top:570.31px;font-size:10.5px;color:#303339;-webkit-text-stroke:0.22px;left:945.20px;transform:scaleX(1.0746);">64.0754</span>
<div class="b" style="left:922.4571599999999px;top:585.2px;width:66.54284000000001px;height:14.6px;background:#fbd6d6;border-radius:3px;"></div>
<span class="t" id="t143" style="top:587.31px;font-size:10.5px;color:#e01616;-webkit-text-stroke:0.22px;left:751.60px;transform:scaleX(1.0574);">107,255.2</span>
<span class="t" id="t144" style="top:587.31px;font-size:10.5px;color:#303339;-webkit-text-stroke:0.22px;left:860.90px;transform:scaleX(1.0739);">9.4526</span>
<span class="t" id="t145" style="top:587.31px;font-size:10.5px;color:#303339;-webkit-text-stroke:0.22px;left:945.20px;transform:scaleX(1.0746);">73.5280</span>
<div class="b" style="left:913.5667115px;top:602.2px;width:75.4332885px;height:14.6px;background:#fbd6d6;border-radius:3px;"></div>
<span class="t" id="t146" style="top:604.31px;font-size:10.5px;color:#e01616;-webkit-text-stroke:0.22px;left:751.60px;transform:scaleX(1.0574);">107,255.1</span>
<span class="t" id="t147" style="top:604.31px;font-size:10.5px;color:#303339;-webkit-text-stroke:0.22px;left:860.90px;transform:scaleX(1.0739);">9.8237</span>
<span class="t" id="t148" style="top:604.31px;font-size:10.5px;color:#303339;-webkit-text-stroke:0.22px;left:945.20px;transform:scaleX(1.0746);">83.3517</span>
<div class="b" style="left:905.975481px;top:619.2px;width:83.024519px;height:14.6px;background:#fbd6d6;border-radius:3px;"></div>
<span class="t" id="t149" style="top:621.31px;font-size:10.5px;color:#e01616;-webkit-text-stroke:0.22px;left:751.60px;transform:scaleX(1.0574);">107,255.0</span>
<span class="t" id="t150" style="top:621.31px;font-size:10.5px;color:#303339;-webkit-text-stroke:0.22px;left:860.90px;transform:scaleX(1.0739);">8.3881</span>
<span class="t" id="t151" style="top:621.31px;font-size:10.5px;color:#303339;-webkit-text-stroke:0.22px;left:945.20px;transform:scaleX(1.0746);">91.7398</span>
<div class="b" style="left:897.3847685000001px;top:636.2px;width:91.6152315px;height:14.6px;background:#fbd6d6;border-radius:3px;"></div>
<span class="t" id="t152" style="top:638.31px;font-size:10.5px;color:#e01616;-webkit-text-stroke:0.22px;left:751.60px;transform:scaleX(1.0574);">107,254.9</span>
<span class="t" id="t153" style="top:638.31px;font-size:10.5px;color:#303339;-webkit-text-stroke:0.22px;left:860.90px;transform:scaleX(1.0739);">9.4925</span>
<span class="t" id="t154" style="top:638.31px;font-size:10.5px;color:#303339;-webkit-text-stroke:0.22px;left:938.90px;transform:scaleX(1.0754);">101.2323</span>
<span class="t" id="t155" style="top:425.83px;font-size:14.5px;color:#e00f0f;font-weight:bold;left:751.50px;transform:scaleX(1.1005);">107,256.3</span>
<svg class="b" style="left:825px;top:427.2px;" width="10" height="12" viewBox="0 0 10 12"><path d="M5 11 V1.8 M1.4 5.2 L5 1.6 L8.6 5.2" fill="none" stroke="#e00f0f" stroke-width="1.7"/></svg>
<svg class="b" style="left:924.5px;top:428.5px;" width="9" height="10" viewBox="0 0 9 10"><path d="M1 0.4 V9.8" stroke="#18a82c" stroke-width="1.5"/><path d="M1.6 1 H8.4 L6.8 3.4 L8.4 5.8 H1.6 Z" fill="#18a82c"/></svg>
<span class="t" id="t156" style="top:427.69px;font-size:11px;color:#18a82c;font-weight:bold;left:939.00px;transform:scaleX(0.9481);">107,266.1</span>
<div class="b" style="left:939px;top:440.2px;width:46.5px;height:2px;border-top:1.4px dotted #18a82c;"></div>
<div class="b" style="left:1001.7px;top:126.2px;width:251.3px;height:525.8px;background:#ffffff;border-radius:7px;"></div>
<div class="b" style="left:1011.6px;top:136px;width:60.4px;height:20px;background:#f1f2f5;border-radius:4px;"></div>
<span class="t" id="t157" style="top:140.71px;font-size:10.5px;color:#2e3036;-webkit-text-stroke:0.22px;left:1018.40px;transform:scaleX(0.9951);">Isolated</span>
<svg class="b" style="left:1060px;top:144.2px;" width="6" height="4.2" viewBox="0 0 6 4.2"><path d="M0 0 H6 L3 4.2 Z" fill="#2e3036"/></svg>
<div class="b" style="left:1080px;top:136px;width:88px;height:20px;background:#f1f2f5;border-radius:4px;"></div>
<div class="b" style="left:1076.6px;top:132.4px;width:95px;height:27.6px;border-radius:1px;border:2.3px solid #3e51d7;box-sizing:border-box;"></div>
<span class="t" id="t158" style="top:140.71px;font-size:10.5px;color:#2e3036;-webkit-text-stroke:0.22px;left:1086.40px;transform:scaleX(0.9585);">Leverage 10x</span>
<svg class="b" style="left:1155px;top:144.2px;" width="6" height="4.2" viewBox="0 0 6 4.2"><path d="M0 0 H6 L3 4.2 Z" fill="#2e3036"/></svg>
<svg class="b" style="left:1207px;top:140px;" width="13" height="13" viewBox="0 0 13 13"><rect x="0.2" y="0.2" width="12.6" height="12.6" rx="2.6" fill="#b3b7c4"/><path d="M2.5 4 H5.5 M4 2.5 V5.5 M7.7 4 H10.7 M2.9 8 L5.1 10.2 M5.1 8 L2.9 10.2 M7.7 8.4 H10.7 M7.7 10 H10.7" stroke="#fff" stroke-width="1.05"/></svg>
<svg class="b" style="left:1229px;top:140px;" width="13" height="13" viewBox="0 0 13 13"><path d="M5.3 0.4 H7.7 L8.1 2 L9.5 2.7 L11 2 L12.4 4 L11.3 5.2 V7.8 L12.4 9 L11 11 L9.5 10.3 L8.1 11 L7.7 12.6 H5.3 L4.9 11 L3.5 10.3 L2 11 L0.6 9 L1.7 7.8 V5.2 L0.6 4 L2 2 L3.5 2.7 L4.9 2 Z" fill="#b3b7c4"/><circle cx="6.5" cy="6.5" r="2" fill="#fff"/></svg>
<span class="t" id="t159" style="top:171.84px;font-size:12px;color:#15151c;font-weight:bold;left:1011.60px;transform:scaleX(0.8510);">Limit</span>
<span class="t" id="t160" style="top:171.84px;font-size:12px;color:#9a9da4;-webkit-text-stroke:0.22px;left:1043.60px;transform:scaleX(0.9376);">Market</span>
<span class="t" id="t161" style="top:171.84px;font-size:12px;color:#9a9da4;-webkit-text-stroke:0.22px;left:1085.40px;transform:scaleX(0.9370);">Stop Limit</span>
<svg class="b" style="left:1140.4px;top:176.4px;" width="5.6" height="4" viewBox="0 0 5.6 4"><path d="M0 0 H5.6 L2.8 4 Z" fill="#a6a9b0"/></svg>
<div class="b" style="left:1001px;top:197px;width:252px;height:1px;background:#eff0f3;"></div>
<span class="t" id="t162" style="top:208.11px;font-size:10.5px;color:#6c6f76;-webkit-text-stroke:0.22px;left:1011.60px;transform:scaleX(0.9499);">Order Price</span>
<div class="b" style="left:1011px;top:225px;width:232px;height:33.5px;background:#f2f3f6;border-radius:7px;"></div>
<span class="t" id="t163" style="top:234.60px;font-size:13px;color:#24262c;-webkit-text-stroke:0.22px;left:1025.40px;transform:scaleX(0.8777);-webkit-text-stroke:0.45px;">107260.1</span>
<span class="t" id="t164" style="top:235.02px;font-size:12.5px;color:#8b8e94;-webkit-text-stroke:0.22px;left:1196.60px;transform:scaleX(0.9521);">USDT</span>
<span class="t" id="t165" style="top:269.11px;font-size:10.5px;color:#6c6f76;-webkit-text-stroke:0.22px;left:1011.60px;transform:scaleX(0.9649);">Order by Qty</span>
<svg class="b" style="left:1074px;top:272.6px;" width="5.4" height="3.8" viewBox="0 0 5.4 3.8"><path d="M0 0 H5.4 L2.7 3.8 Z" fill="#a6a9b0"/></svg>
<div class="b" style="left:1011px;top:285.6px;width:232px;height:33.5px;background:#f2f3f6;border-radius:7px;"></div>
<span class="t" id="t166" style="top:295.60px;font-size:13px;color:#24262c;-webkit-text-stroke:0.22px;left:1025.00px;transform:scaleX(0.9952);-webkit-text-stroke:0.45px;">0</span>
<span class="t" id="t167" style="top:296.02px;font-size:12.5px;color:#8b8e94;-webkit-text-stroke:0.22px;left:1205.40px;transform:scaleX(0.9440);">BTC</span>
<div class="b" style="left:1012px;top:328.4px;width:43px;height:19.6px;background:#f3f4f7;border-radius:4px;"></div>
<span class="t" id="t168" style="top:332.71px;font-size:10.5px;color:#8b8e94;-webkit-text-stroke:0.22px;left:1025.91px;">5%</span>
<div class="b" style="left:1059px;top:328.4px;width:43px;height:19.6px;background:#f3f4f7;border-radius:4px;"></div>
<span class="t" id="t169" style="top:332.71px;font-size:10.5px;color:#8b8e94;-webkit-text-stroke:0.22px;left:1069.99px;">10%</span>
<div class="b" style="left:1106px;top:328.4px;width:43px;height:19.6px;background:#f3f4f7;border-radius:4px;"></div>
<span class="t" id="t170" style="top:332.71px;font-size:10.5px;color:#8b8e94;-webkit-text-stroke:0.22px;left:1116.99px;">25%</span>
<div class="b" style="left:1153px;top:328.4px;width:43px;height:19.6px;background:#f3f4f7;border-radius:4px;"></div>
<span class="t" id="t171" style="top:332.71px;font-size:10.5px;color:#8b8e94;-webkit-text-stroke:0.22px;left:1163.99px;">50%</span>
<div class="b" style="left:1200px;top:328.4px;width:43px;height:19.6px;background:#f3f4f7;border-radius:4px;"></div>
<span class="t" id="t172" style="top:332.71px;font-size:10.5px;color:#8b8e94;-webkit-text-stroke:0.22px;left:1208.07px;">100%</span>
<div class="b" style="left:1011.5px;top:365.5px;width:231.5px;height:52px;background:#fff;border-radius:7px;border:1px solid #eceef2;box-sizing:border-box;"></div>
<span class="t" id="t173" style="top:377.01px;font-size:10.5px;color:#9a9da4;-webkit-text-stroke:0.22px;left:1022.80px;transform:scaleX(0.9280);">Value</span>
<span class="t" id="t174" style="top:377.01px;font-size:10.5px;color:#e01616;-webkit-text-stroke:0.22px;left:1176.20px;transform:scaleX(0.9925);">0</span>
<span class="t" id="t175" style="top:377.01px;font-size:10.5px;color:#9a9da4;-webkit-text-stroke:0.22px;left:1186.20px;transform:scaleX(1.2321);">/</span>
<span class="t" id="t176" style="top:377.01px;font-size:10.5px;color:#1a60dd;-webkit-text-stroke:0.22px;left:1192.60px;transform:scaleX(0.9925);">0</span>
<span class="t" id="t177" style="top:377.01px;font-size:10.5px;color:#9a9da4;-webkit-text-stroke:0.22px;left:1206.00px;transform:scaleX(0.8988);">USDT</span>
<span class="t" id="t178" style="top:395.31px;font-size:10.5px;color:#9a9da4;-webkit-text-stroke:0.22px;left:1022.80px;transform:scaleX(0.9586);">Cost</span>
<span class="t" id="t179" style="top:395.31px;font-size:10.5px;color:#e01616;-webkit-text-stroke:0.22px;left:1176.20px;transform:scaleX(0.9925);">0</span>
<span class="t" id="t180" style="top:395.31px;font-size:10.5px;color:#9a9da4;-webkit-text-stroke:0.22px;left:1186.20px;transform:scaleX(1.2321);">/</span>
<span class="t" id="t181" style="top:395.31px;font-size:10.5px;color:#1a60dd;-webkit-text-stroke:0.22px;left:1192.60px;transform:scaleX(0.9925);">0</span>
<span class="t" id="t182" style="top:395.31px;font-size:10.5px;color:#9a9da4;-webkit-text-stroke:0.22px;left:1206.00px;transform:scaleX(0.8988);">USDT</span>
<svg class="b" style="left:1011.5px;top:430.5px;" width="11" height="11" viewBox="0 0 11 11"><circle cx="5.5" cy="5.5" r="4.8" fill="none" stroke="#bfc2cc" stroke-width="0.9"/><path d="M5.5 3 V8 M3 5.5 H8" stroke="#bfc2cc" stroke-width="0.9"/></svg>
<span class="t" id="t183" style="top:430.11px;font-size:10.5px;color:#b4b8c6;font-weight:bold;left:1027.00px;transform:scaleX(0.9285);text-decoration:underline;">Add TP/SL</span>
<div class="b" style="left:1011.5px;top:453.5px;width:111.5px;height:34px;background:#ee0000;border-radius:7px;"></div>
<div class="b" style="left:1132px;top:453.5px;width:111px;height:34px;background:#0455ea;border-radius:7px;"></div>
<span class="t" id="t184" style="top:464.84px;font-size:12px;color:#fff;font-weight:bold;left:1038.00px;transform:scaleX(0.9452);">Buy / Long</span>
<span class="t" id="t185" style="top:464.84px;font-size:12px;color:#fff;font-weight:bold;left:1157.00px;transform:scaleX(0.9699);">Sell / Short</span>
<div class="b" style="left:1012px;top:498.8px;width:12px;height:11.6px;background:#fff;border-radius:2px;border:1px solid #d4d6db;box-sizing:border-box;"></div>
<svg class="b" style="left:1014.6px;top:501.6px;" width="7" height="6" viewBox="0 0 7 6"><path d="M0.8 3 L2.8 5 L6.2 1" fill="none" stroke="#d9dbe0" stroke-width="1"/></svg>
<span class="t" id="t186" style="top:499.11px;font-size:10.5px;color:#2e3036;-webkit-text-stroke:0.22px;left:1030.30px;transform:scaleX(0.9555);">Reduce Only</span>
<span class="t" id="t187" style="top:499.11px;font-size:10.5px;color:#9a9da4;-webkit-text-stroke:0.22px;left:1186.80px;transform:scaleX(0.8889);">TIF</span>
<span class="t" id="t188" style="top:499.11px;font-size:10.5px;color:#24262c;-webkit-text-stroke:0.22px;left:1209.40px;transform:scaleX(0.8750);">GTC</span>
<svg class="b" style="left:1233.6px;top:502.4px;" width="5.8" height="4" viewBox="0 0 5.8 4"><path d="M0 0 H5.8 L2.9 4 Z" fill="#24262c"/></svg>
<div class="b" style="left:27px;top:657.3px;width:968.9px;height:52.7px;background:#ffffff;border-radius:7px 7px 0 0;"></div>
<span class="t" id="t189" style="top:670.92px;font-size:12.5px;color:#15151c;font-weight:bold;left:37.20px;transform:scaleX(0.9155);">Open Order</span>
<span class="t" id="t190" style="top:670.92px;font-size:12.5px;color:#9a9da4;-webkit-text-stroke:0.22px;left:118.20px;transform:scaleX(0.9211);">Positions (1)</span>
<span class="t" id="t191" style="top:670.92px;font-size:12.5px;color:#9a9da4;-webkit-text-stroke:0.22px;left:200.00px;transform:scaleX(0.9754);">Order History</span>
<span class="t" id="t192" style="top:670.92px;font-size:12.5px;color:#9a9da4;-webkit-text-stroke:0.22px;left:290.00px;transform:scaleX(0.9656);">Trade History</span>
<span class="t" id="t193" style="top:670.92px;font-size:12.5px;color:#9a9da4;-webkit-text-stroke:0.22px;left:380.00px;transform:scaleX(0.8764);">PnL</span>
<div class="b" style="left:843.8px;top:670.4px;width:12.6px;height:12.6px;background:#3f5de8;border-radius:2.5px;"></div>
<svg class="b" style="left:846.2px;top:673.4px;" width="8" height="7" viewBox="0 0 8 7"><path d="M1 3.4 L3.2 5.6 L7 1.4" fill="none" stroke="#fff" stroke-width="1.3"/></svg>
<span class="t" id="t194" style="top:671.19px;font-size:11px;color:#24262c;-webkit-text-stroke:0.22px;left:862.40px;transform:scaleX(1.0146);">All Markets</span>
<span class="t" id="t195" style="top:671.19px;font-size:11px;color:#bfc5d6;font-weight:bold;left:935.50px;transform:scaleX(0.9568);">Cancel All</span>
<div class="b" style="left:27px;top:694px;width:969px;height:1px;background:#eff0f3;"></div>
<div class="b" style="left:37.5px;top:702px;width:35.5px;height:8px;background:#f1f2f5;border-radius:4px 4px 0 0;"></div>
<div class="b" style="left:27px;top:695px;width:969px;height:15px;overflow:hidden;"><span class="t" style="left:17px;top:12.2px;font-size:11px;font-weight:bold;color:#24262c;">Limit</span><span class="t" style="left:60px;top:12.2px;font-size:11px;color:#8b8e94;">Stop</span><span class="t" style="left:102.5px;top:12.2px;font-size:11px;color:#8b8e94;">TP/SL</span></div>
<div class="b" style="left:1001.7px;top:657.3px;width:251.3px;height:52.7px;background:#ffffff;border-radius:7px 7px 0 0;"></div>
<span class="t" id="t196" style="top:670.62px;font-size:12.5px;color:#15151c;font-weight:bold;left:1011.70px;transform:scaleX(0.9170);">Balance (USDT)</span>
<span class="t" id="t197" style="top:671.27px;font-size:11.5px;color:#5b6fe0;font-weight:bold;left:1200.80px;transform:scaleX(0.9253);">Transfer</span>
<span class="t" id="t198" style="top:697.11px;font-size:10.5px;color:#9a9da4;-webkit-text-stroke:0.22px;left:1011.70px;transform:scaleX(0.9518);">Wallet Balance</span>
<span class="t" id="t199" style="top:697.11px;font-size:10.5px;color:#24262c;-webkit-text-stroke:0.22px;left:1188.00px;transform:scaleX(1.0426);">5,949.2430</span>
</body></html>
